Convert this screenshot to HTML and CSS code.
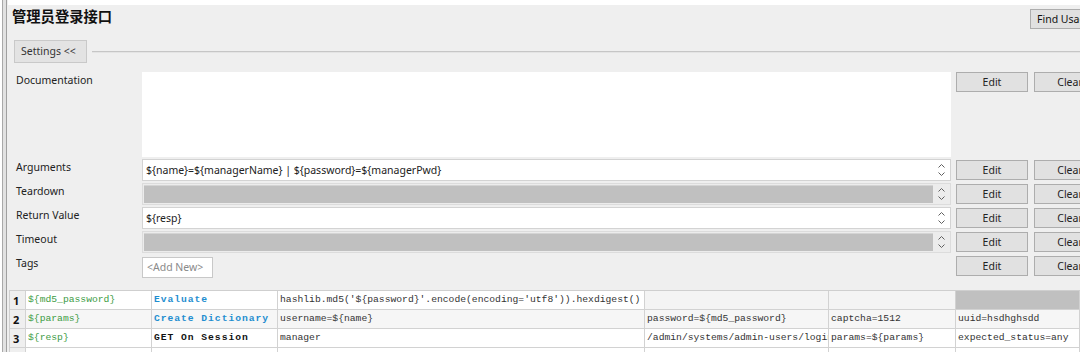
FILE: index.html
```html
<!DOCTYPE html>
<html>
<head>
<meta charset="utf-8">
<link rel="stylesheet" href="styles.css">
</head>
<body>
<div class="frame">
  <div class="edge"></div>
  <div class="main">
    <div class="strip"></div>
    <div class="header">
      <div class="title">管理员登录接口</div>
      <button class="btn find">Find Usages</button>
    </div>
    <div class="settings-row">
      <button class="btn settings">Settings &lt;&lt;</button>
      <div class="rule"></div>
    </div>
    <div class="form">
      <div class="label">Documentation</div>
      <div class="docbox"></div>
      <button class="btn act first">Edit</button>
      <button class="btn act first">Clear</button>

      <div class="label">Arguments</div>
      <div class="field"><div class="txt">${name}=${managerName} | ${password}=${managerPwd}</div><div class="spin"><svg width="9" height="16" viewBox="0 0 9 16"><path d="M1.5 5.5 L4.5 2.5 L7.5 5.5 M1.5 10.5 L4.5 13.5 L7.5 10.5" fill="none" stroke="#606060" stroke-width="1"/></svg></div></div>
      <button class="btn act">Edit</button>
      <button class="btn act">Clear</button>

      <div class="label">Teardown</div>
      <div class="field off"><div class="txt"></div><div class="spin"><svg width="9" height="16" viewBox="0 0 9 16"><path d="M1.5 5.5 L4.5 2.5 L7.5 5.5 M1.5 10.5 L4.5 13.5 L7.5 10.5" fill="none" stroke="#606060" stroke-width="1"/></svg></div></div>
      <button class="btn act">Edit</button>
      <button class="btn act">Clear</button>

      <div class="label">Return Value</div>
      <div class="field"><div class="txt">${resp}</div><div class="spin"><svg width="9" height="16" viewBox="0 0 9 16"><path d="M1.5 5.5 L4.5 2.5 L7.5 5.5 M1.5 10.5 L4.5 13.5 L7.5 10.5" fill="none" stroke="#606060" stroke-width="1"/></svg></div></div>
      <button class="btn act">Edit</button>
      <button class="btn act">Clear</button>

      <div class="label">Timeout</div>
      <div class="field off"><div class="txt"></div><div class="spin"><svg width="9" height="16" viewBox="0 0 9 16"><path d="M1.5 5.5 L4.5 2.5 L7.5 5.5 M1.5 10.5 L4.5 13.5 L7.5 10.5" fill="none" stroke="#606060" stroke-width="1"/></svg></div></div>
      <button class="btn act">Edit</button>
      <button class="btn act">Clear</button>

      <div class="label">Tags</div>
      <div class="tagcell"><span class="addnew">&lt;Add New&gt;</span></div>
      <button class="btn act">Edit</button>
      <button class="btn act">Clear</button>
    </div>

    <div class="grid">
      <div class="c num">1</div>
      <div class="c var">${md5_password}</div>
      <div class="c kw">Evaluate</div>
      <div class="c">hashlib.md5('${password}'.encode(encoding='utf8')).hexdigest()</div>
      <div class="c shade"></div>
      <div class="c shade"></div>
      <div class="c dark"></div>

      <div class="c num">2</div>
      <div class="c var r2">${params}</div>
      <div class="c kw r2">Create Dictionary</div>
      <div class="c r2">username=${name}</div>
      <div class="c r2">password=${md5_password}</div>
      <div class="c r2">captcha=1512</div>
      <div class="c r2">uuid=hsdhghsdd</div>

      <div class="c num">3</div>
      <div class="c var">${resp}</div>
      <div class="c kw black">GET On Session</div>
      <div class="c">manager</div>
      <div class="c">/admin/systems/admin-users/login</div>
      <div class="c">params=${params}</div>
      <div class="c">expected_status=any</div>

      <div class="c num"></div>
      <div class="c"></div>
      <div class="c"></div>
      <div class="c"></div>
      <div class="c"></div>
      <div class="c"></div>
      <div class="c"></div>
    </div>
  </div>
</div>
</body>
</html>
```

FILE: styles.css
```css
* { box-sizing: border-box; }
html, body { margin: 0; padding: 0; background: #ffffff; }
body {
  width: 1080px;
  height: 359px;
  overflow: hidden;
  font-family: "Noto Sans", "Liberation Sans", sans-serif;
  font-size: 10.5px;
  color: #1a1a1a;
}
.frame {
  display: flex;
  height: 352px;
  overflow: hidden;
}
.edge {
  width: 8px;
  flex-shrink: 0;
  background: linear-gradient(to right, #ffffff 0, #ffffff 2px, #a9a9a9 2px, #a9a9a9 3px, #e2e2e2 3px, #e2e2e2 6px, #a0a0a0 6px, #a0a0a0 7px, #efefef 7px);
}
.main {
  flex: 1;
  background: #efefef;
  overflow: hidden;
  display: flex;
  flex-direction: column;
}
.strip { height: 5px; background: #ffffff; flex-shrink: 0; }
.header {
  height: 30px;
  display: flex;
  align-items: flex-start;
  justify-content: space-between;
  flex-shrink: 0;
}
.title {
  font-family: "Noto Sans CJK SC", sans-serif;
  font-weight: bold;
  font-size: 14.3px;
  line-height: 20px;
  padding-left: 4px;
  margin-top: 1px;
  color: #111;
}
.btn {
  font-family: "Noto Sans", "Liberation Sans", sans-serif;
  font-size: 10.5px;
  color: #111;
  background: #e1e1e1;
  border: 1px solid #adadad;
  padding: 0;
  margin: 0;
  height: 20px;
  line-height: 18px;
  text-align: center;
}
.find {
  width: 80px;
  flex-shrink: 0;
  margin-top: 4px;
  margin-right: -30px;
  text-align: left;
  padding-left: 6px;
}
.settings-row {
  display: flex;
  align-items: center;
  margin-top: 5px;
  height: 23px;
  flex-shrink: 0;
}
.settings {
  width: 73px;
  height: 23px;
  margin-left: 6px;
  line-height: 21px;
  text-align: left;
  padding-left: 6px;
  background: #e3e3e3;
  border-color: #c9c9c9;
  color: #333;
}
.rule {
  flex: 1;
  height: 2px;
  margin-left: 5px;
  background: #c6c6c6;
  border-bottom: 1px solid #e4e4e4;
}
.form {
  display: grid;
  grid-template-columns: 129px 809px 72px 72px;
  grid-template-rows: 85px 22px 22px 22px 22px 22px;
  column-gap: 5px;
  row-gap: 2px;
  margin-top: 9px;
  width: 1100px;
  flex-shrink: 0;
}
.form > .btn:nth-child(4n) { margin-left: 1px; }
.label {
  padding-left: 8px;
  padding-top: 1px;
  line-height: 14px;
  color: #222;
}
.docbox { background: #ffffff; }
.act {
  width: 72px;
  align-self: start;
  margin-top: 1px;
  color: #222;
}
.act.first { margin-top: 0; }
.field {
  display: flex;
  background: #ffffff;
  border: 1px solid #d3d3d3;
  padding: 1px;
}
.field .txt {
  flex: 1;
  line-height: 18px;
  padding-left: 2px;
  white-space: nowrap;
  overflow: hidden;
  color: #222;
}
.field.off { background: #ececec; border-color: #dcdcdc; }
.field.off .txt { background: #c0c0c0; border-top: 1px solid #d4d4d4; }
.spin {
  width: 16px;
  display: flex;
  align-items: center;
  justify-content: center;
}
.tagcell { display: flex; align-items: flex-end; }
.addnew {
  display: block;
  width: 71px;
  height: 21px;
  background: #ffffff;
  border: 1px solid #c8c8c8;
  color: #8a8a8a;
  line-height: 19px;
  padding-left: 4px;
  margin-bottom: -1px;
}
.grid {
  display: grid;
  grid-template-columns: 16px 126px 126px 367px 184px 127px 1fr;
  grid-auto-rows: 19px;
  margin-top: 13px;
  margin-left: 1px;
  border-left: 1px solid #cfcfcf;
  border-top: 1px solid #cfcfcf;
  font-family: "Liberation Mono", "DejaVu Sans Mono", monospace;
  font-size: 9.7px;
  flex-shrink: 0;
}
.c {
  background: #ffffff;
  border-right: 1px solid #d2d2d2;
  border-bottom: 1px solid #d2d2d2;
  line-height: 18px;
  padding-left: 2px;
  white-space: nowrap;
  overflow: hidden;
  color: #333;
}
.num {
  background: #efefef;
  font-family: "Noto Sans", "Liberation Sans", sans-serif;
  font-weight: bold;
  font-size: 11px;
  color: #111;
  padding-left: 3px;
  line-height: 20px;
}
.var { color: #3c9c44; }
.kw {
  color: #1f8ed0;
  font-weight: bold;
  letter-spacing: 0.95px;
}
.kw.black { color: #111; }
.r2 { background: #f6f6f6; }
.shade { background: #f4f4f4; }
.dark { background: #c0c0c0; }
```
